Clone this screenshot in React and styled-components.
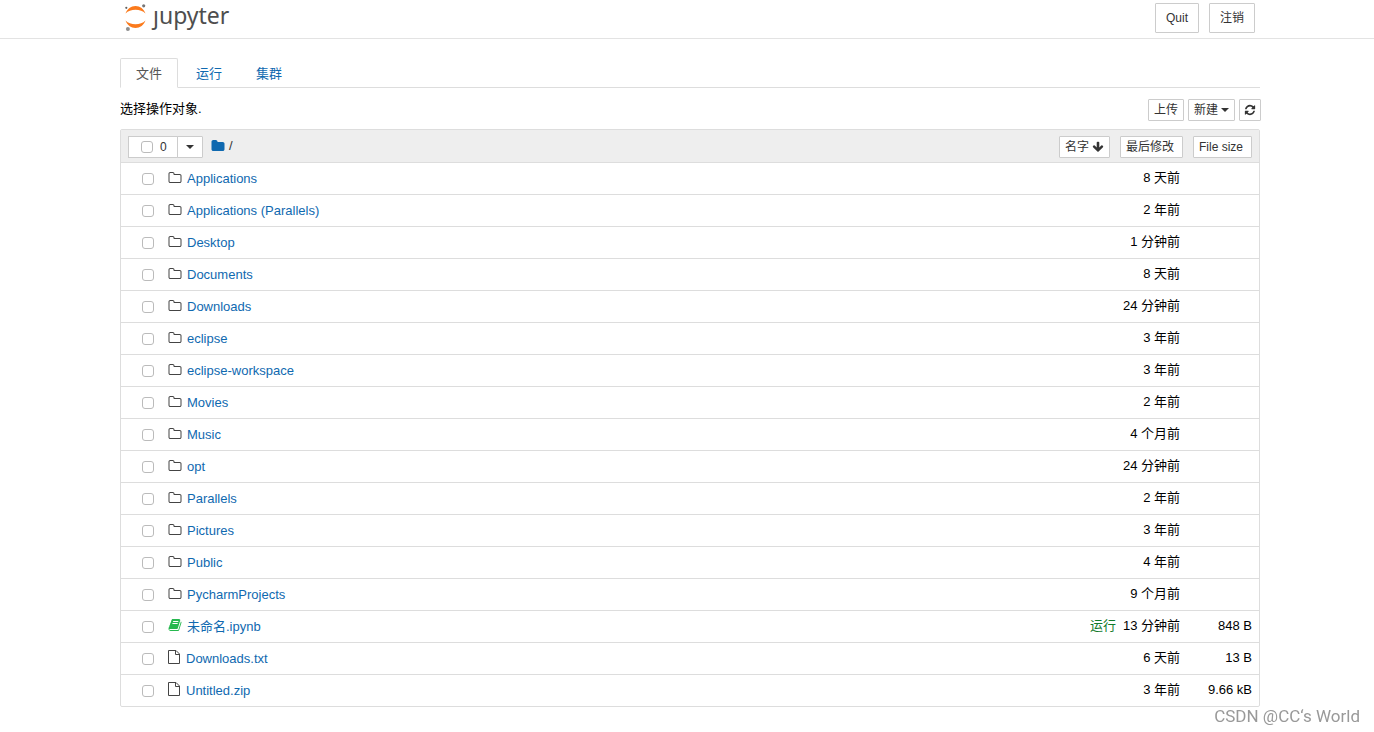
import React from 'react';
import styled, { createGlobalStyle, css } from 'styled-components';

const GlobalStyle = createGlobalStyle`
  *, *::before, *::after { box-sizing: border-box; }
  body {
    margin: 0;
    background: #fff;
    color: #000;
    font-family: "Liberation Sans", "Noto Sans CJK SC", sans-serif;
    font-size: 13px;
    line-height: 20px;
  }
  button, input { font-family: inherit; }
  a { color: #0f69b0; text-decoration: none; }
  svg { display: block; }
`;

const Header = styled.header`
  height: 39px;
  padding-left: 6px;
  border-bottom: 1px solid #e3e3e3;
`;

const Container = styled.div`
  max-width: 1140px;
  margin: 0 auto;
`;

const HeaderBar = styled(Container)`
  display: flex;
  justify-content: space-between;
  align-items: flex-start;
  padding: 3px 5px 0 4px;
`;

const Logo = styled.a`
  display: flex;
  gap: 7px;
  color: #4e4e4e;
  font-family: "Noto Sans", sans-serif;
  font-size: 23px;
  line-height: 24px;
`;

const Button = styled.button`
  display: inline-flex;
  align-items: center;
  justify-content: center;
  gap: 3px;
  height: ${(p) => (p.$large ? '30px' : '22px')};
  padding: ${(p) => (p.$large ? '0 10px' : '0 5px')};
  border: 1px solid #ccc;
  border-radius: 1px;
  background: #fff;
  color: #333;
  font-size: 12px;
  line-height: 18px;
  white-space: nowrap;
`;

const SortButton = styled(Button)`
  padding-right: ${(p) => (p.$sorted ? '5px' : '8px')};
  vertical-align: top;
`;

const IconButton = styled(Button)`
  padding: 0 4px;
`;

const HeaderActions = styled.div`
  display: flex;
  gap: 10px;
`;

const Main = styled.main`
  padding: 19px 0 0 6px;
`;

const Tabs = styled.nav`
  display: flex;
  gap: 2px;
  height: 30px;
  border-bottom: 1px solid #ddd;
`;

const Tab = styled.a`
  height: 30px;
  padding: 5px 15px;
  border: 1px solid transparent;
  border-radius: 2px 2px 0 0;
  ${(p) =>
    p.$active &&
    css`
      border-color: #ddd #ddd #fff;
      background: #fff;
      color: #555;
    `}
`;

const Toolbar = styled.div`
  display: flex;
  justify-content: space-between;
  padding: 11px 0 8px;
`;

const Prompt = styled.p`
  margin: 0;
`;

const ToolbarActions = styled.div`
  display: flex;
  gap: 4px;
  margin-right: -1px;
`;

const Files = styled.table`
  width: 100%;
  table-layout: fixed;
  border: 1px solid #ddd;
  border-radius: 2px;
  border-collapse: separate;
  border-spacing: 0;

  th {
    height: 32px;
    padding: 6px 0 4px;
    background: #eee;
    font-weight: normal;
    text-align: left;
  }
  td {
    height: 32px;
    padding: 0;
    border-top: 1px solid #ddd;
    white-space: nowrap;
  }
`;

const Column = styled.col`
  width: ${(p) => p.$width};
`;

const SortCell = styled.th`
  && { padding-right: ${(p) => p.$inset}; text-align: right; }
`;

const ValueCell = styled.td`
  && {
    padding-right: ${(p) => (p.$size ? '7px' : '4px')};
    padding-bottom: 1px;
    text-align: right;
  }
  color: ${(p) => (p.$running ? '#117a2b' : '#000')};
`;

const Selection = styled.div`
  display: flex;
  align-items: center;
  padding-left: 7px;
`;

const SelectAll = styled.label`
  display: flex;
  align-items: center;
  gap: 7px;
  width: 50px;
  height: 22px;
  padding-left: 12px;
  border: 1px solid #ccc;
  background: #fff;
  color: #333;
  font-size: 12px;
`;

const MenuButton = styled(Button)`
  width: 26px;
  margin: 0 8px 0 -1px;
`;

const Breadcrumb = styled.span`
  display: flex;
  align-items: center;
  gap: 4px;
  padding-bottom: 2px;
  color: #333;
`;

const Checkbox = styled.input.attrs({ type: 'checkbox' })`
  appearance: none;
  flex: none;
  width: 12px;
  height: 12px;
  margin: 0;
  border: 1px solid #bbb;
  border-radius: 3px;
  background: #fff;
`;

const Item = styled.div`
  display: flex;
  align-items: center;
  padding-left: 21px;
`;

const ItemIcon = styled.span`
  width: ${(p) => (p.$kind === 'file' ? '18px' : '19px')};
  margin-left: 14px;
  padding-bottom: ${(p) => (p.$kind === 'folder' ? '1px' : '4px')};
  color: ${(p) => (p.$kind === 'notebook' ? '#27b84f' : '#444')};
`;

const Caret = styled.span`
  border: 4px solid transparent;
  border-top-color: #333;
  border-bottom: 0;
`;

const Watermark = styled.div`
  position: fixed;
  right: 14px;
  bottom: 6px;
  color: #999;
  font-family: Roboto, sans-serif;
  font-size: 17px;
`;

const PATHS = {
  folder:
    'M1728 608v704q0 92-66 158t-158 66h-1216q-92 0-158-66t-66-158v-960q0-92 66-158t158-66h320q92 0 158 66t66 158v32h672q92 0 158 66t66 158z',
  folderOutline:
    'M1600 1312v-704q0-40-28-68t-68-28h-704q-40 0-68-28t-28-68v-64q0-40-28-68t-68-28h-320q-40 0-68 28t-28 68v960q0 40 28 68t68 28h1216q40 0 68-28t28-68zm128-704v704q0 92-66 158t-158 66h-1216q-92 0-158-66t-66-158v-960q0-92 66-158t158-66h320q92 0 158 66t66 158v32h672q92 0 158 66t66 158z',
  refresh:
    'M1639 1056q0 5-1 7-64 268-268 434.5t-478 166.5q-146 0-282.5-55t-243.5-157l-129 129q-19 19-45 19t-45-19-19-45v-448q0-26 19-45t45-19h448q26 0 45 19t19 45-19 45l-137 137q71 66 161 102t187 36q134 0 250-65t186-179q11-17 53-117 8-23 30-23h192q13 0 22.5 9.5t9.5 22.5zm25-800v448q0 26-19 45t-45 19h-448q-26 0-45-19t-19-45 19-45l138-138q-148-137-349-137-134 0-250 65t-186 179q-11 17-53 117-8 23-30 23h-199q-13 0-22.5-9.5t-9.5-22.5v-7q65-268 270-434.5t480-166.5q146 0 284 55.5t245 156.5l130-129q19-19 45-19t45 19 19 45z',
  arrowDown:
    'M1675 832q0 53-37 90l-651 652q-39 37-91 37-53 0-90-37l-651-652q-38-36-38-90 0-53 38-91l74-75q39-37 91-37 53 0 90 37l294 294v-704q0-52 38-90t90-38h128q52 0 90 38t38 90v704l294-294q37-37 90-37 52 0 91 37l75 75q37 39 37 91z',
  book:
    'M1703 478q40 57 18 129l-275 906q-19 64-76.5 107.5t-122.5 43.5h-923q-77 0-148.5-53.5t-99.5-131.5q-24-67-2-127 0-4 3-27t4-37q1-8-3-21.5t-3-19.5q2-11 8-21t16.5-23.5 16.5-23.5q23-38 45-91.5t30-91.5q3-10 .5-30t-.5-28q3-11 17-28t17-23q21-36 42-92t25-90q1-9-2.5-32t.5-28q4-13 22-30.5t22-22.5q19-26 42.5-84.5t27.5-96.5q1-8-3-25.5t-2-26.5q2-8 9-18t18-23 17-21q8-12 16.5-30.5t15-35 16-36 19.5-32 26.5-23.5 36-11.5 47.5 5.5l-1 3q38-9 51-9h761q74 0 114 56t18 130l-274 906q-36 119-71.5 153.5t-128.5 34.5h-869q-27 0-38 15-11 16-1 43 24 70 144 70h923q29 0 56-15.5t35-41.5l300-987q7-22 5-57 38 15 59 43zm-1064 2q-4 13 2 22.5t20 9.5h608q13 0 25.5-9.5t16.5-22.5l21-64q4-13-2-22.5t-20-9.5h-608q-13 0-25.5 9.5t-16.5 22.5zm-83 256q-4 13 2 22.5t20 9.5h608q13 0 25.5-9.5t16.5-22.5l21-64q4-13-2-22.5t-20-9.5h-608q-13 0-25.5 9.5t-16.5 22.5z',
};

function Icon({ name, size = 14 }) {
  return (
    <svg width={size} height={size} viewBox="0 0 1792 1792" fill="currentColor" aria-hidden="true">
      <path d={PATHS[name]} />
    </svg>
  );
}

function FileIcon() {
  return (
    <svg width="12" height="14" viewBox="0 0 12 14" fill="none" stroke="currentColor" aria-hidden="true">
      <path d="M.5.5H8L11.500 4V13.500H.5ZM7.500.5V4.500H11.500" />
    </svg>
  );
}

function JupyterMark() {
  return (
    <svg width="22" height="28" viewBox="0 0 22 28" aria-hidden="true">
      <path d="M1.500 10.500C3 6 7 3 11.500 3s8.500 3 10 7.500C19 8 15.500 6.800 11.500 6.800S4 8 1.500 10.500Z" fill="#fb7a1c" />
      <path d="M1.500 17.500C4 20 7.500 21.300 11.500 21.300s7.500-1.300 10-3.800C20 22 16 25 11.500 25s-8.500-3-10-7.500Z" fill="#fb7a1c" />
      <circle cx="19.700" cy="2.800" r="1.600" fill="#767677" />
      <circle cx="2.300" cy="4.800" r="1.100" fill="#616262" />
      <circle cx="3.900" cy="26" r="2" fill="#8e8e8e" />
    </svg>
  );
}

const FILES = [
  ['Applications', '8 天前'],
  ['Applications (Parallels)', '2 年前'],
  ['Desktop', '1 分钟前'],
  ['Documents', '8 天前'],
  ['Downloads', '24 分钟前'],
  ['eclipse', '3 年前'],
  ['eclipse-workspace', '3 年前'],
  ['Movies', '2 年前'],
  ['Music', '4 个月前'],
  ['opt', '24 分钟前'],
  ['Parallels', '2 年前'],
  ['Pictures', '3 年前'],
  ['Public', '4 年前'],
  ['PycharmProjects', '9 个月前'],
  ['未命名.ipynb', '13 分钟前', '848 B', 'notebook'],
  ['Downloads.txt', '6 天前', '13 B', 'file'],
  ['Untitled.zip', '3 年前', '9.66 kB', 'file'],
];

function FileRow({ name, modified, size, kind = 'folder' }) {
  return (
    <tr>
      <td>
        <Item>
          <Checkbox aria-label={name} />
          <ItemIcon $kind={kind}>
            {kind === 'folder' && <Icon name="folderOutline" />}
            {kind === 'notebook' && <Icon name="book" />}
            {kind === 'file' && <FileIcon />}
          </ItemIcon>
          <a href="#open">{name}</a>
        </Item>
      </td>
      <ValueCell $running>{kind === 'notebook' ? '运行' : ''}</ValueCell>
      <ValueCell>{modified}</ValueCell>
      <ValueCell $size>{size}</ValueCell>
    </tr>
  );
}

export default function App() {
  return (
    <>
      <GlobalStyle />
      <Header>
        <HeaderBar>
          <Logo href="#home" aria-label="jupyter">
            <JupyterMark />
            <span>ȷupyter</span>
          </Logo>
          <HeaderActions>
            <Button $large>Quit</Button>
            <Button $large>注销</Button>
          </HeaderActions>
        </HeaderBar>
      </Header>
      <Main>
        <Container>
          <Tabs>
            <Tab href="#files" $active>文件</Tab>
            <Tab href="#running">运行</Tab>
            <Tab href="#clusters">集群</Tab>
          </Tabs>
          <Toolbar>
            <Prompt>选择操作对象.</Prompt>
            <ToolbarActions>
              <Button>上传</Button>
              <Button>新建<Caret /></Button>
              <IconButton aria-label="刷新"><Icon name="refresh" size={12} /></IconButton>
            </ToolbarActions>
          </Toolbar>
          <Files>
            <colgroup>
              <Column />
              <Column $width="80px" />
              <Column $width="64px" />
              <Column $width="75px" />
            </colgroup>
            <thead>
              <tr>
                <th>
                  <Selection>
                    <SelectAll>
                      <Checkbox />0
                    </SelectAll>
                    <MenuButton aria-label="选择"><Caret /></MenuButton>
                    <Breadcrumb>
                      <a href="#root" aria-label="/"><Icon name="folder" /></a>/
                    </Breadcrumb>
                  </Selection>
                </th>
                <SortCell $inset="10px">
                  <SortButton $sorted>名字<Icon name="arrowDown" size={12} /></SortButton>
                </SortCell>
                <SortCell $inset="1px"><SortButton>最后修改</SortButton></SortCell>
                <SortCell $inset="7px"><SortButton>File size</SortButton></SortCell>
              </tr>
            </thead>
            <tbody>
              {FILES.map(([name, modified, size, kind]) => (
                <FileRow key={name} name={name} modified={modified} size={size} kind={kind} />
              ))}
            </tbody>
          </Files>
        </Container>
      </Main>
      <Watermark>CSDN @CC‘s World</Watermark>
    </>
  );
}
